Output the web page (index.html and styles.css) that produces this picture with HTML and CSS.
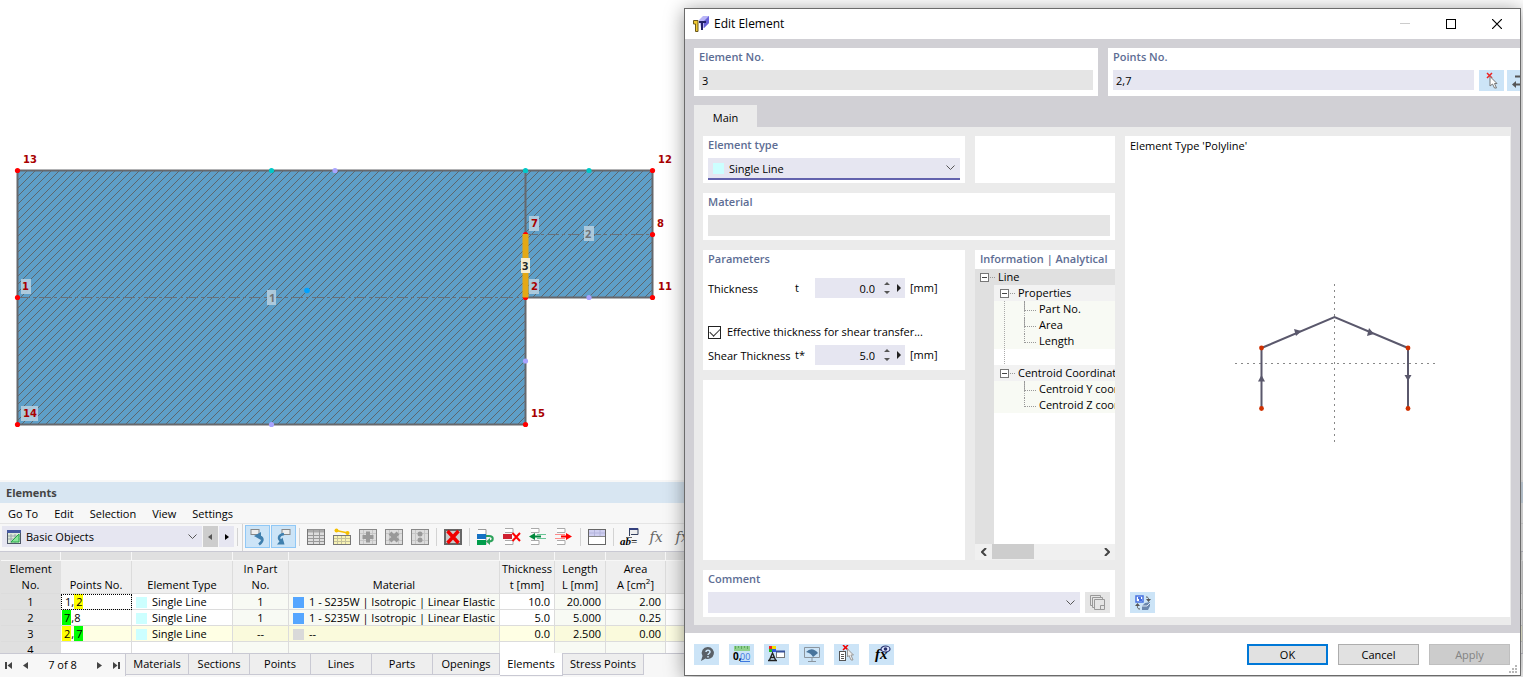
FILE: index.html
```html
<!DOCTYPE html>
<html lang="en">
<head>
<meta charset="utf-8">
<title>Edit Element</title>
<link rel="stylesheet" href="styles.css">
</head>
<body>
<main class="workspace">
  <section class="canvas" aria-label="Cross-section view">
    <svg class="drawing" width="684" height="480">
      <defs>
        <pattern id="hatch" width="8" height="8" patternUnits="userSpaceOnUse" patternTransform="translate(6 0)">
          <rect width="8" height="8" fill="#5e9fc8"/>
          <path d="M-1 1L1-1M0 8L8 0M7 9L9 7" stroke="#5d666c" stroke-width="1" shape-rendering="crispEdges"/>
        </pattern>
      </defs>
      <path d="M18 171H653V298H526V425H18Z" fill="url(#hatch)"/>
      <path d="M17.500 170.500H652.500V297.500H525.500V424.500H17.500ZM525.500 171V235" fill="none" stroke="#66686c" stroke-width="2"/>
      <path d="M18 297.500H525M526 234.500H652" stroke="#66707a" stroke-dasharray="12 3 3 3" fill="none"/>
      <g fill="#f00">
        <circle cx="17.500" cy="170.500" r="2.600"/><circle cx="652.500" cy="170.500" r="2.600"/>
        <circle cx="17.500" cy="297.500" r="2.600"/><circle cx="17.500" cy="424.500" r="2.600"/>
        <circle cx="525.500" cy="424.500" r="2.600"/><circle cx="652.500" cy="234.500" r="2.600"/>
        <circle cx="652.500" cy="297.500" r="2.600"/><circle cx="525.500" cy="234.500" r="2.600"/>
        <circle cx="525.500" cy="297.500" r="2.600"/>
      </g>
      <rect x="522.500" y="234" width="6" height="63.500" fill="#e3a816"/>
      <g fill="#00c8c8"><circle cx="271.500" cy="170.500" r="2.600"/><circle cx="525.500" cy="170.500" r="2.600"/><circle cx="589" cy="170.500" r="2.600"/></g>
      <g fill="#a9a4ff"><circle cx="335" cy="170.500" r="2.600"/><circle cx="271.500" cy="424.500" r="2.600"/><circle cx="589" cy="297.500" r="2.600"/><circle cx="525.500" cy="361" r="2.600"/></g>
      <circle cx="307" cy="290.500" r="2.800" fill="#00a2ff"/>
      <g fill="#b7d0df" fill-opacity=".88">
        <rect x="21" y="279" width="10" height="15"/><rect x="21" y="406" width="17" height="15"/>
        <rect x="267" y="290" width="9" height="15"/><rect x="529" y="216" width="10" height="15"/>
        <rect x="529" y="279" width="10" height="15"/><rect x="584" y="226" width="10" height="15"/>
      </g>
      <rect x="521" y="258" width="9" height="15" fill="#f7ecce"/>
      <g class="point-label">
        <text x="23" y="163">13</text><text x="658" y="163">12</text><text x="22" y="290">1</text>
        <text x="23" y="417">14</text><text x="531" y="227">7</text><text x="531" y="290">2</text>
        <text x="657" y="227">8</text><text x="658" y="290">11</text><text x="531" y="417">15</text>
      </g>
      <g class="member-label">
        <text x="269" y="302">1</text><text x="585" y="238">2</text><text class="selected-label" x="522" y="270">3</text>
      </g>
    </svg>
  </section>

  <section class="panel">
    <h2 class="panel-title">Elements</h2>
    <nav class="menu">
      <button>Go To</button><button>Edit</button><button>Selection</button><button>View</button><button>Settings</button>
    </nav>
    <div class="toolbar">
      <div class="combo table-combo">
        <svg width="14" height="14"><rect x=".5" y=".5" width="13" height="13" fill="#dce9d8" stroke="#4c5666"/><path d="M0 0H14V3H0Z" fill="#4559a0"/><path d="M1 6H13M1 9H13M4 4V13M8 4V13" stroke="#9aa6ad"/><path d="M4 12L12 4V12Z" fill="#8be69a" stroke="#25a848"/></svg>
        <select aria-label="Table group"><option>Basic Objects</option></select>
        <svg class="chevron" width="9" height="6"><path d="M.5.500L4.500 4.500L8.500.500" fill="none" stroke="#555"/></svg>
      </div>
      <button class="step step-off" aria-label="Previous"><svg width="5" height="8"><path d="M4 1V7L0 4Z" fill="#555"/></svg></button>
      <button class="step" aria-label="Next"><svg width="5" height="8"><path d="M1 1V7L5 4Z" fill="#000"/></svg></button>
      <span class="sep"></span><span class="sep-full"></span>
      <button class="toggle" aria-label="Select in graphic"><svg width="16" height="18"><rect x="1" y="1.500" width="8" height="5" fill="#eee" stroke="#888"/><path d="M9 16.500C14 13 13.500 8.500 8 8.500" fill="none" stroke="#3f7fae" stroke-width="2.500"/><path d="M4 8L11 4V12Z" fill="#3f7fae"/></svg></button>
      <button class="toggle" aria-label="Select in table"><svg width="16" height="18"><rect x="6" y="1.500" width="8" height="5" fill="#eee" stroke="#888"/><path d="M8 6C2 7 2 11 5 13" fill="none" stroke="#3f7fae" stroke-width="2.500"/><path d="M1 16.500L8.500 16.500L6.500 9.500Z" fill="#3f7fae"/></svg></button>
      <span class="sep"></span>
      <button class="tool" aria-label="Table"><svg width="18" height="18"><rect x=".5" y="1.500" width="17" height="15" fill="#ddd" stroke="#777"/><path d="M1 3H17" stroke="#aaa" stroke-width="3"/><path d="M1 7.500H17M1 10.500H17M1 13.500H17M6.500 2V16M12.500 2V16" stroke="#999"/></svg></button>
      <button class="tool" aria-label="Edit members"><svg width="18" height="18"><path d="M3 2.500L15 5" stroke="#f5c000" stroke-width="1.500"/><circle cx="3.500" cy="2.500" r="2" fill="#f5c000"/><circle cx="14.500" cy="5" r="2" fill="#f5c000"/><rect x=".5" y="7.500" width="17" height="9" fill="#f8f3b4" stroke="#777"/><path d="M1 10.500H17M1 13.500H17M4.500 8V16M8.500 8V16M12.500 8V16" stroke="#c4c19a"/></svg></button>
      <button class="tool" aria-label="Add"><svg width="18" height="18"><rect x=".5" y="1.500" width="17" height="15" fill="#ddd" stroke="#888"/><path d="M1 5.500H17M1 12.500H17M4.500 2V16M13.500 2V16" stroke="#c6c6c6"/><path d="M9 3.500V14.500M3.500 9H14.500" stroke="#999" stroke-width="4"/></svg></button>
      <button class="tool" aria-label="Remove"><svg width="18" height="18"><rect x=".5" y="1.500" width="17" height="15" fill="#ddd" stroke="#888"/><path d="M1 5.500H17M1 12.500H17M4.500 2V16M13.500 2V16" stroke="#c6c6c6"/><path d="M5 5L13 13M13 5L5 13" stroke="#999" stroke-width="4"/></svg></button>
      <button class="tool" aria-label="Divide"><svg width="18" height="18"><rect x=".5" y="1.500" width="17" height="15" fill="#ddd" stroke="#888"/><path d="M1 5.500H17M1 12.500H17M4.500 2V16M13.500 2V16" stroke="#c6c6c6"/><circle cx="9" cy="6" r="2.500" fill="#999"/><circle cx="9" cy="12" r="2.500" fill="#999"/></svg></button>
      <span class="sep"></span>
      <button class="tool" aria-label="Delete all"><svg width="18" height="18"><rect x="1" y="2" width="16" height="14" fill="#ccc" stroke="#666" stroke-width="2"/><path d="M3.500 3L14.500 15M14.500 3L3.500 15" stroke="#f00000" stroke-width="3.500"/></svg></button>
      <span class="sep"></span>
      <button class="tool" aria-label="Copy row"><svg width="18" height="18"><path d="M1 1.500H9V16.500H1" fill="#fff" stroke="#999"/><path d="M0 6H9V11H0Z" fill="#1672c4"/><path d="M0 12H9V17H0Z" fill="#009d4b"/><path d="M9 8H12C17 8 17 13.500 12 13.500" fill="none" stroke="#2ca25a" stroke-width="2"/><path d="M9 13.500L13 10V17Z" fill="#2ca25a"/></svg></button>
      <button class="tool" aria-label="Delete row"><svg width="18" height="18"><path d="M2 .500H10V4.500H2M2 12.500H10V16.500H2" fill="#fff" stroke="#aaa"/><path d="M0 6H9V11H0Z" fill="#cf2030"/><path d="M9.500 5L17 13M17 5L9.500 13" stroke="#f00" stroke-width="2"/></svg></button>
      <button class="tool" aria-label="Insert row"><svg width="18" height="18"><path d="M2 .500H10V4.500H2M2 12.500H10V16.500H2" fill="#fff" stroke="#aaa"/><path d="M8 6.500H17M8 10.500H17" stroke="#69c596"/><path d="M5 8.500H12" stroke="#00893c" stroke-width="2"/><path d="M0 8.500L6 5V12Z" fill="#00893c"/></svg></button>
      <button class="tool" aria-label="Move row out"><svg width="18" height="18"><path d="M2 .500H10V4.500H2M2 12.500H10V16.500H2" fill="#fff" stroke="#aaa"/><path d="M0 6.500H10M0 10.500H10" stroke="#ff8a8a"/><path d="M6 8.500H13" stroke="#f00" stroke-width="2"/><path d="M17 8.500L11 5V12Z" fill="#f00"/></svg></button>
      <span class="sep"></span>
      <button class="tool" aria-label="Table layout"><svg width="18" height="18"><rect x=".5" y="1.500" width="17" height="15" fill="#fff" stroke="#666"/><path d="M1 2H17V8H1Z" fill="#cfcff0"/><path d="M1 5H17M6.500 2V8M12 2V8" stroke="#b4b4dc"/><path d="M1 8.500H17" stroke="#888"/></svg></button>
      <span class="sep"></span>
      <button class="tool" aria-label="Names"><svg width="18" height="18" overflow="visible"><path d="M8.500 8V.500H17V6.500H10" fill="#eee" stroke="#34405e"/><path d="M8 1H17" stroke="#34407e" stroke-width="2"/><path d="M5 9.500H11" stroke="#666"/><text class="ab-glyph" x="-1" y="17">ab=</text></svg></button>
      <button class="tool" aria-label="Formula"><span class="fx-glyph">fx</span></button>
      <button class="tool" aria-label="Formula list"><span class="fx-glyph">fx</span></button>
    </div>

    <div class="grid-wrap">
      <table class="grid">
        <colgroup><col class="c-no"><col class="c-points"><col class="c-type"><col class="c-part"><col class="c-mat"><col class="c-thick"><col class="c-len"><col class="c-area"><col></colgroup>
        <thead>
          <tr class="strip"><td></td><td></td><td></td><td></td><td></td><td></td><td></td><td></td><td></td></tr>
          <tr class="names"><th class="corner">Element<br>No.</th><th><br>Points No.</th><th><br>Element Type</th><th>In Part<br>No.</th><th><br>Material</th><th>Thickness<br>t [mm]</th><th>Length<br>L [mm]</th><th>Area<br>A [cm<sup>2</sup>]</th><th></th></tr>
        </thead>
        <tbody>
          <tr><th>1</th><td class="focus"><span class="digit">1</span>,<mark class="y">2</mark></td><td><i class="swatch cyan"></i>Single Line</td><td class="mid ro">1</td><td class="ro"><i class="swatch blue"></i>1 - S235W | Isotropic | Linear Elastic</td><td class="num">10.0</td><td class="num ro">20.000</td><td class="num ro">2.00</td><td></td></tr>
          <tr><th>2</th><td><mark class="g">7</mark>,8</td><td><i class="swatch cyan"></i>Single Line</td><td class="mid ro">1</td><td class="ro"><i class="swatch blue"></i>1 - S235W | Isotropic | Linear Elastic</td><td class="num">5.0</td><td class="num ro">5.000</td><td class="num ro">0.25</td><td></td></tr>
          <tr class="current"><th>3</th><td><mark class="y">2</mark>,<mark class="g">7</mark></td><td><i class="swatch cyan"></i>Single Line</td><td class="mid ro">--</td><td class="ro"><i class="swatch grey"></i>--</td><td class="num">0.0</td><td class="num ro">2.500</td><td class="num ro">0.00</td><td></td></tr>
          <tr><th>4</th><td></td><td></td><td class="ro"></td><td class="ro"></td><td></td><td class="ro"></td><td class="ro"></td><td></td></tr>
        </tbody>
      </table>
    </div>

    <div class="tabbar">
      <div class="pager">
        <button aria-label="First"><svg width="7" height="7"><path d="M1 0V7" stroke="#444" stroke-width="2"/><path d="M7 0V7L2.500 3.500Z" fill="#444"/></svg></button>
        <button aria-label="Previous table"><svg width="5" height="7"><path d="M5 0V7L0 3.500Z" fill="#444"/></svg></button>
        <span class="pager-text">7 of 8</span>
        <button aria-label="Next table"><svg width="5" height="7"><path d="M0 0V7L5 3.500Z" fill="#444"/></svg></button>
        <button aria-label="Last"><svg width="7" height="7"><path d="M6 0V7" stroke="#444" stroke-width="2"/><path d="M0 0V7L4.500 3.500Z" fill="#444"/></svg></button>
      </div>
      <button class="tab w63">Materials</button><button class="tab w61">Sections</button><button class="tab w61">Points</button><button class="tab w61">Lines</button><button class="tab w61">Parts</button><button class="tab w67">Openings</button><button class="tab w63 tab-on">Elements</button><button class="tab w81">Stress Points</button>
    </div>
  </section>
</main>

<div class="dialog" role="dialog" aria-labelledby="dlg-title">
  <header class="titlebar">
    <svg width="16" height="16"><path d="M6 4L10 0H16V7L11 12H8Z" fill="#b9b5f7"/><path d="M11 5L16 0V7L11 12Z" fill="#6a62d8"/><path d="M.5 4.500H5V15.500H2.500V8H.500Z" fill="#f0c830" stroke="#6b5a1c"/><path d="M6 6H13M9 6V14" stroke="#22206a" stroke-width="2"/></svg>
    <h1 id="dlg-title">Edit Element</h1>
    <button class="win" aria-label="Minimize"><svg width="10" height="10"><path d="M0 4.500H10" stroke="#ccc"/></svg></button>
    <button class="win" aria-label="Maximize"><svg width="10" height="10"><rect x=".5" y=".5" width="9" height="9" fill="none" stroke="#000"/></svg></button>
    <button class="win" aria-label="Close"><svg width="10" height="10"><path d="M0 0L10 10M10 0L0 10" stroke="#000" stroke-width="1.200"/></svg></button>
  </header>

  <div class="dialog-body">
    <div class="id-row">
      <div class="box box-no">
        <label for="el-no">Element No.</label>
        <input id="el-no" class="field readonly" value="3" readonly>
      </div>
      <div class="box box-points">
        <label for="pts">Points No.</label>
        <div class="field-row">
          <input id="pts" class="field" value="2,7">
          <button class="icon-btn" aria-label="Pick points"><svg width="16" height="18"><path d="M3 1L8 6M8 1L3 6" stroke="#e22" stroke-width="1.500"/><path d="M6 4.500V14L8.500 12L10.500 16H12.500L10.500 11.500H13Z" fill="#fff" stroke="#777"/></svg></button>
          <button class="icon-btn" aria-label="Swap points"><svg width="16" height="18"><path d="M3 4.500H15M3 12.500H15" stroke="#555" stroke-width="2"/><path d="M0 12.500L4 9V16Z" fill="#555"/></svg></button>
        </div>
      </div>
    </div>

    <div class="page-tabs"><button class="page-tab">Main</button></div>
    <div class="page">
      <div class="box a-type">
        <label for="etype">Element type</label>
        <div class="combo type-combo"><i class="swatch cyan"></i><select id="etype"><option>Single Line</option></select><svg class="chevron" width="9" height="6"><path d="M.5.500L4.500 4.500L8.500.500" fill="none" stroke="#555"/></svg></div>
      </div>
      <div class="box a-empty1"></div>
      <div class="box a-mat"><label for="mat">Material</label><input id="mat" class="field readonly" readonly></div>
      <div class="box a-params">
        <h3>Parameters</h3>
        <div class="param first">
          <label for="t">Thickness</label><span class="sym">t</span>
          <div class="spin"><input id="t" value="0.0"><svg width="18" height="14"><path d="M0 4L3 1L6 4ZM0 10L3 13L6 10Z" fill="#555"/><path d="M13 3V11L17 7Z" fill="#222"/></svg></div><span>[mm]</span>
        </div>
        <label class="check"><input type="checkbox" checked>Effective thickness for shear transfer...</label>
        <div class="param">
          <label for="ts">Shear Thickness</label><span class="sym">t*</span>
          <div class="spin"><input id="ts" value="5.0"><svg width="18" height="14"><path d="M0 4L3 1L6 4ZM0 10L3 13L6 10Z" fill="#555"/><path d="M13 3V11L17 7Z" fill="#222"/></svg></div><span>[mm]</span>
        </div>
      </div>
      <div class="box a-empty2"></div>
      <div class="box a-info">
        <h3>Information | Analytical</h3>
        <div class="tree">
          <div class="node n0"><i class="minus"></i><i class="dots"></i>Line</div>
          <div class="branch">
            <div class="node n1"><i class="minus"></i><i class="dots"></i>Properties</div>
            <div class="kids trunk"><div class="node n2">Part No.</div><div class="node n2">Area</div><div class="node n2">Length</div></div>
            <div class="node trunk"></div>
            <div class="node n1"><i class="minus"></i><i class="dots"></i>Centroid Coordinates</div>
            <div class="kids kids-last"><div class="node n2">Centroid Y coordinate</div><div class="node n2">Centroid Z coordinate</div></div>
          </div>
        </div>
        <div class="hscroll">
          <button aria-label="Scroll left"><svg width="6" height="8"><path d="M5 0L1 4L5 8" fill="none" stroke="#444" stroke-width="2"/></svg></button>
          <div class="track"><div class="thumb"></div></div>
          <button aria-label="Scroll right"><svg width="6" height="8"><path d="M1 0L5 4L1 8" fill="none" stroke="#444" stroke-width="2"/></svg></button>
        </div>
      </div>
      <div class="box a-comment">
        <label for="comm">Comment</label>
        <div class="field-row">
          <div class="combo"><select id="comm"><option></option></select><svg class="chevron" width="9" height="6"><path d="M.5.500L4.500 4.500L8.500.500" fill="none" stroke="#555"/></svg></div>
          <button class="icon-btn off" aria-label="Comment library"><svg width="16" height="16"><path d="M3 10.500H.500V.500H10.500V3M5 12.500H2.500V2.500H12.500V5" fill="none" stroke="#999"/><path d="M4.500 4.500H14.500V14.500H4.500ZM14 10.500H10.500V14" fill="none" stroke="#999"/></svg></button>
        </div>
      </div>
      <div class="box a-preview">
        <h4>Element Type 'Polyline'</h4>
        <svg class="preview" viewBox="0 0 200 160" width="200" height="160">
          <path d="M0 79.500H200M99.500 0V160" stroke="#888" stroke-dasharray="2 4" fill="none"/>
          <path d="M26.500 124.500V64L99.500 33L173 64V124.500" fill="none" stroke="#5a586c" stroke-width="2"/>
          <g fill="#5a586c"><path d="M23 97.500H30L26.500 91Z"/><path d="M59 45L66.500 47L61 52Z"/><path d="M132 52L139 50L134 44Z"/><path d="M169.500 91H176.500L173 97Z"/></g>
          <g fill="#d03000"><circle cx="26.500" cy="64" r="2.400"/><circle cx="26.500" cy="124.500" r="2.400"/><circle cx="173" cy="64" r="2.400"/><circle cx="173" cy="124.500" r="2.400"/></g>
        </svg>
        <button class="icon-btn" aria-label="Switch view"><svg width="16" height="18"><path d="M1 2H8V8H1Z" fill="#fff" stroke="#4670e0" stroke-width="1.500"/><path d="M3 4H5V6H7" stroke="#4670e0" stroke-width="2" fill="none"/><path d="M11 3C14 3 13.500 5 13.500 7M5 15C2 15 2.500 13 2.500 11" fill="none" stroke="#555"/><path d="M11 5H16L13.500 8ZM0 12H5L2.500 9Z" fill="#555"/><path d="M10 9L15 8V12L13 16L7 16V12Z" fill="#6b87ad"/><path d="M7 12H12L15 9" stroke="#dce6f3" fill="none"/></svg></button>
      </div>
    </div>
  </div>

  <footer class="dialog-foot">
    <div class="foot-tools">
      <button class="icon-btn" aria-label="Help"><svg width="18" height="18"><path d="M10 2A6 6 0 1 1 7.500 13.500L3 16L4.500 11A6 6 0 0 1 10 2Z" fill="#5a6067"/><path d="M8 7C8 4.500 12 4.500 12 7C12 8.500 10 8.500 10 10M10 11V12.500" fill="none" stroke="#cce4f7" stroke-width="1.500"/></svg></button>
      <button class="icon-btn" aria-label="Units"><svg width="18" height="18"><path d="M1 1H17V6H1Z" fill="#8fd08c"/><path d="M2.500 1V4M5.500 1V3M8.500 1V4M11.500 1V3M14.500 1V4" stroke="#5eaa5e"/><text class="unit-zero" x="0" y="15">0,</text><text class="unit-dec" x="7" y="15">00</text><path d="M7 16.500H17" stroke="#3d78df"/></svg></button>
      <button class="icon-btn" aria-label="Display"><svg width="18" height="18"><path d="M1 1H4V4H1Z" fill="#e22"/><path d="M4 1H8V4H4Z" fill="#f2df00"/><path d="M1 4H4V7H1Z" fill="#2b2"/><path d="M4 4H8V7H4Z" fill="#3359e0"/><path d="M1.500 15L4.500 8L7.500 15M2.500 12.500H6.500M0 15.500H9" fill="none" stroke="#222" stroke-width="1.400"/><rect x="8.500" y="6.500" width="8" height="6" fill="#fff" stroke="#777"/><path d="M8 6.500H17" stroke="#35509a" stroke-width="2"/></svg></button>
      <button class="icon-btn" aria-label="View"><svg width="18" height="18"><path d="M1.500 12.500V2.500H16.500V12.500ZM9 13V16M5 16.500H13" fill="none" stroke="#8b959e"/><path d="M3 7Q9 1 15 8L10 12Q8 8 3 7Z" fill="#48749c"/></svg></button>
      <button class="icon-btn" aria-label="Select"><svg width="18" height="18"><path d="M5 0L10 5M10 0L5 5" stroke="#e00" stroke-width="1.500"/><rect x="1.500" y="6.500" width="6" height="9" fill="#fff" stroke="#555"/><path d="M3 9.500H6M3 11.500H6M3 13.500H6" stroke="#555"/><path d="M9.500 4V12L11 10.500L13 15H15L13 10H15.500Z" fill="#eee" stroke="#999"/></svg></button>
      <button class="icon-btn" aria-label="Formula view"><svg width="18" height="18"><text class="fx-dark" x="2" y="14">fx</text><ellipse cx="12.500" cy="4" rx="4.500" ry="3" fill="#dfe6ff" stroke="#28336f" stroke-width="1.200"/><circle cx="12.500" cy="4" r="1.800" fill="#28336f"/></svg></button>
    </div>
    <div class="actions">
      <button class="action primary">OK</button><button class="action">Cancel</button><button class="action" disabled>Apply</button>
    </div>
    <svg class="grip" width="8" height="8"><path d="M6 0H8V2H6ZM3 3H5V5H3ZM6 3H8V5H6ZM0 6H2V8H0ZM3 6H5V8H3ZM6 6H8V8H6Z" fill="#b8b8b8"/></svg>
  </footer>
</div>
</body>
</html>
```
FILE: styles.css
```css
* { box-sizing: border-box; }
html, body { height: 100%; }
body {
  margin: 0;
  position: relative;
  overflow: hidden;
  background: #fff;
  color: #000;
  font: 11px/16px "Open Sans", "Noto Sans", sans-serif;
}
button, input, select { font: inherit; color: inherit; margin: 0; padding: 0; border: 0; background: none; border-radius: 0; outline: 0; }
h1, h2, h3, h4 { margin: 0; font-size: inherit; font-weight: inherit; }
svg { display: block; flex: none; }
select { appearance: none; flex: 1; min-width: 0; height: 100%; }

.workspace { display: flex; flex-direction: column; height: 100%; }
.canvas { flex: 1; min-height: 0; overflow: hidden; }
.point-label { font: bold 10px "DejaVu Sans", sans-serif; fill: #a80000; }
.member-label { font: bold 11px "Open Sans", sans-serif; fill: #6f7478; }
.selected-label { fill: #222; }

.panel { background: #f7f7f7; padding-top: 2px; }
.panel-title { height: 21px; padding-left: 6px; background: #d8e6f2; color: #444; font-weight: 700; line-height: 21px; }
.menu { display: flex; gap: 16px; height: 20px; padding: 2px 0 0 8px; }
.toolbar { display: flex; align-items: center; height: 29px; border-top: 1px solid #e5e5e5; border-bottom: 1px solid #c9c9d3; padding: 0 0 2px 2px; overflow: hidden; }
.combo { display: flex; flex: 1; align-items: center; gap: 5px; height: 21px; padding: 0 5px; background: #e6e6f1; }
.table-combo { flex: 0 0 200px; }
.chevron { pointer-events: none; }
.step { flex: none; display: grid; place-items: center; width: 15px; height: 21px; margin-left: 1px; background: #e6e6f1; }
.step-off { background: #cdcdcd; }
.sep { flex: none; width: 1px; height: 18px; margin: 0 3px; background: #d3d3d3; }
.sep-full { flex: none; width: 1px; height: 29px; margin: 0 2px 0 1px; background: #d3d3d3; }
.toggle { flex: none; display: grid; place-items: center; width: 25px; height: 23px; margin-right: 1px; background: #cce4f7; border: 1px solid #90c8f6; }
.toggle + .sep { margin-left: 2px; }
.tool { flex: none; display: grid; place-items: center; width: 26px; height: 24px; }
.ab-glyph { font: italic bold 11px "Liberation Serif", serif; }
.fx-glyph { font: italic 14px/18px "DejaVu Serif", serif; color: #666; }

.grid-wrap { height: 101px; overflow: hidden; }
.grid { width: 100%; table-layout: fixed; border-collapse: separate; border-spacing: 0; border-left: 1px solid #e0e0e0; }
.c-no { width: 60px; } .c-points { width: 71px; } .c-type { width: 101px; } .c-part { width: 56px; }
.c-mat { width: 211px; } .c-thick { width: 55px; } .c-len { width: 51px; } .c-area { width: 60px; }
.grid td, .grid th { padding: 0 4px; height: 16px; border-right: 1px solid #dcdcdc; border-bottom: 1px solid #dcdcdc; background: #fff; font-weight: 400; line-height: 15px; white-space: nowrap; }
.grid .strip td { height: 9px; background: #e0e0e0; border-color: #f7f7f7; }
.grid .names th { height: 33px; padding: 0; background: #efefef; line-height: 16px; }
.grid .names .corner, .grid tbody th { background: #e0e0e0; border-right-color: #e0e0e0; }
.grid sup { font-size: 8px; line-height: 0; }
.grid .ro { background: #f8faf4; }
.grid .current td { background: #ffffe4; }
.grid .current .ro { background: #fafadc; }
.grid .mid { text-align: center; }
.grid .num { text-align: right; }
.grid .focus { outline: 1px dotted #000; outline-offset: -1px; }
.grid td:nth-child(2) { padding-left: 1px; }
mark, .digit { display: inline-block; height: 15px; vertical-align: top; color: inherit; padding: 0 1px 0 2px; }
.digit { padding: 0 0 0 3px; }
.y { background: #ff0; } .g { background: #0f0; }
.swatch { display: inline-block; flex: none; width: 11px; height: 11px; margin-right: 5px; vertical-align: -2px; }
.cyan { background: #ccffff; } .blue { background: #55a6ff; } .grey { background: #d9d9d9; }

.tabbar { display: flex; height: 24px; align-items: flex-start; border-top: 1px solid #c9c9d3; }
.pager { display: flex; align-items: center; gap: 11px; width: 126px; height: 22px; padding: 0 5px; border-right: 1px solid #c9c9d3; }
.pager-text { flex: 1; text-align: center; }
.tab { height: 21px; background: #eee; border-right: 1px solid #c9c9d3; border-bottom: 1px solid #c9c9d3; }
.tab-on { height: 23px; margin-top: -1px; background: #fff; }
.w61 { width: 61px; } .w63 { width: 63px; } .w67 { width: 67px; } .w81 { width: 81px; }

.dialog { position: absolute; top: 8px; right: 2px; bottom: 1px; left: 684px; display: flex; flex-direction: column; background: #fff; border: 1px solid #6b6b6b; box-shadow: 0 2px 18px rgba(0, 0, 0, .4); overflow: hidden; }
.titlebar { display: flex; align-items: center; height: 30px; padding-left: 8px; }
.titlebar h1 { flex: 1; margin-left: 5px; font-size: 12px; }
.win { display: grid; place-items: center; width: 46px; height: 28px; }
.dialog-body { flex: 1; min-height: 0; display: flex; flex-direction: column; padding: 9px 9px 8px; background: #d1d0d5; }
.id-row { display: grid; grid-template-columns: 404fr 439fr; gap: 10px; height: 47px; margin-right: -36px; }
.box { min-width: 0; padding: 0 5px 5px; background: #fff; }
.box > label, .box > h3 { display: block; height: 22px; padding-top: 1px; color: #5d6d94; font-weight: 600; }
.box-points { padding-right: 15px; }
.field { display: block; width: 100%; height: 20px; padding: 0 3px; background: #e6e6f1; }
.readonly { background: #e5e5e5; }
.field-row { display: flex; gap: 5px; }
.box-points .icon-btn + .icon-btn { margin-left: -2px; }
.icon-btn { flex: none; display: grid; place-items: center; width: 25px; height: 21px; background: #cce4f7; }
.off { background: #e5e5e5; }
.page-tabs { margin-top: 10px; height: 22px; }
.page-tab { width: 63px; height: 22px; padding-top: 4px; background: #ebebeb; }
.page { flex: 1; min-height: 0; display: grid; gap: 10px; padding: 9px 1px 8px 9px; background: #ebebeb;
  grid-template-columns: 262fr 140fr 385fr;
  grid-template-rows: 47px 47px 120px 1fr 47px;
  grid-template-areas: "type e1 prev" "mat mat prev" "par info prev" "e2 info prev" "com com prev"; }
.a-type { grid-area: type; } .a-empty1 { grid-area: e1; } .a-mat { grid-area: mat; } .a-params { grid-area: par; }
.a-empty2 { grid-area: e2; } .a-comment { grid-area: com; }
.a-info { grid-area: info; display: flex; flex-direction: column; padding: 0; overflow: hidden; white-space: nowrap; }
.a-preview { grid-area: prev; display: flex; flex-direction: column; justify-content: space-between; padding: 2px 5px 4px; }
.preview { align-self: center; margin: 0 0 18px 34px; }
.a-mat .field { height: 21px; }
.type-combo { height: 22px; border-bottom: 2px solid #6262ad; }
.type-combo .swatch { margin: 0; }
.type-combo select { padding-top: 2px; }

.param { display: flex; align-items: center; height: 20px; }
.first { margin-top: 6px; margin-bottom: 25px; }
.param label { width: 87px; padding-top: 2px; white-space: nowrap; }
.sym { width: 20px; }
.spin { display: flex; align-items: center; width: 90px; height: 20px; margin-right: 5px; padding-right: 3px; background: #e6e6f1; }
.spin input { flex: 1; width: 0; margin-right: 9px; padding-top: 2px; text-align: right; }
.check { display: flex; align-items: center; white-space: nowrap; }
.a-params > .check { display: flex; height: 18px; margin-bottom: 4px; padding: 0; color: #000; font-weight: 400; }
.check input { appearance: none; flex: none; width: 13px; height: 13px; margin-right: 6px; border: 1px solid #222; background: #fff; display: grid; place-items: center; }
.check input:checked::before { content: ""; width: 9px; height: 5px; margin-bottom: 3px; border: solid #333; border-width: 0 0 1px 1px; transform: rotate(-45deg); }

.a-info > h3 { height: 19px; padding-left: 5px; }
.tree { flex: 1; min-height: 0; background: #e0e0e0; display: flex; flex-direction: column; }
.branch { flex: 1; margin-left: 19px; background: #fff; overflow: hidden; }
.node { display: flex; align-items: center; height: 16px; }
.minus { flex: none; width: 9px; height: 9px; border: 1px solid #777; background: linear-gradient(#444, #444) center / 5px 1px no-repeat #fff; }
.dots { flex: none; width: 5px; margin: 0 3px 0 1px; border-top: 1px dotted #999; }
.n0 { padding-left: 5px; }
.n1 { padding-left: 6px; background: #f2f2f2; }
.kids { background-color: #f8faf4; }
.trunk { background-image: repeating-linear-gradient(#aaa 0 1px, transparent 1px 2px); background-size: 1px 100%; background-position: 10px 0; background-repeat: no-repeat; }
.n2 { margin-left: 30px; }
.n2::before { content: ""; flex: none; width: 11px; height: 9px; margin: 0 3px 7px 0; border: dotted #999; border-width: 0 0 1px 1px; }
.n2:not(:last-child) { background: repeating-linear-gradient(#aaa 0 1px, transparent 1px 2px) left / 1px 100% no-repeat; }
.hscroll { display: flex; height: 16px; background: #f0f0f0; }
.hscroll button { display: grid; place-items: center; width: 17px; }
.track { flex: 1; }
.thumb { width: 40%; height: 15px; background: #cdcdcd; }

.dialog-foot { position: relative; display: flex; align-items: center; justify-content: space-between; height: 42px; padding: 0 10px 0 9px; }
.foot-tools, .actions { display: flex; gap: 10px; }
.action { width: 81px; height: 21px; padding-top: 1px; background: #e1e1e1; border: 1px solid #adadad; }
.primary { border: 2px solid #0078d7; }
.action:disabled { background: #ccc; border-color: #bfbfbf; color: #838383; }
.grip { position: absolute; right: 3px; bottom: 2px; }
.unit-zero { font: bold 10px "Open Sans", sans-serif; }
.unit-dec { font: 9px "Open Sans", sans-serif; fill: #3d78df; }
.fx-dark { font: italic bold 15px "Liberation Serif", serif; }
```
